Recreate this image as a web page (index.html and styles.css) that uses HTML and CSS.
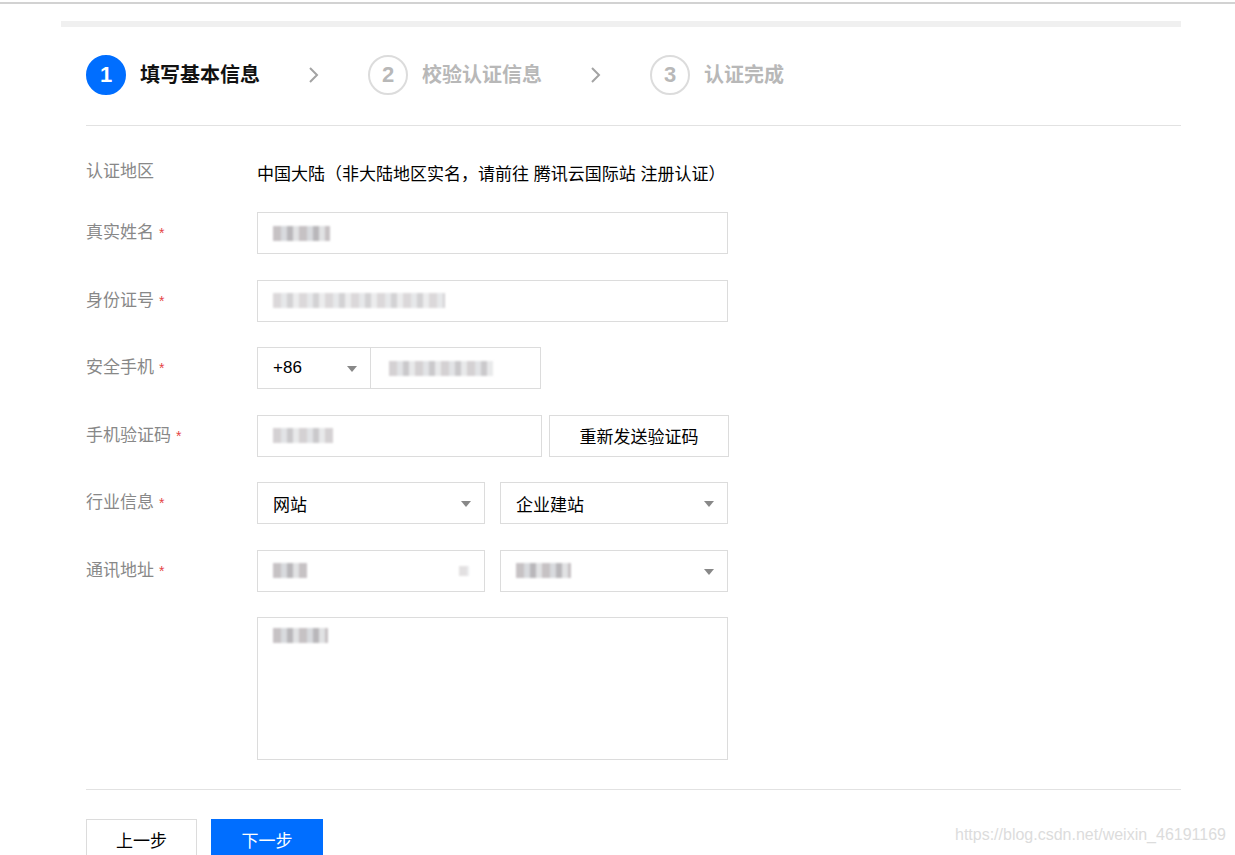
FILE: index.html
```html
<!DOCTYPE html>
<html lang="zh-CN">
<head>
  <meta charset="UTF-8" />
  <meta name="viewport" content="width=device-width, initial-scale=1.0" />
  <title>实名认证 - 填写基本信息</title>
  <link rel="stylesheet" href="styles.css">
</head>
<body>
  <div class="browser-edge"></div>

  <div class="page">
    <div class="page-bar"></div>

    <div class="card">
      <div class="steps">
        <div class="step active">
          <span class="step-num">1</span>
          <span class="step-title">填写基本信息</span>
        </div>
        <svg class="step-arrow" width="12" height="18" viewBox="0 0 12 18">
          <polyline points="2,2 9,9 2,16" fill="none" stroke="#a3a3a3" stroke-width="2" />
        </svg>
        <div class="step">
          <span class="step-num">2</span>
          <span class="step-title">校验认证信息</span>
        </div>
        <svg class="step-arrow" width="12" height="18" viewBox="0 0 12 18">
          <polyline points="2,2 9,9 2,16" fill="none" stroke="#a3a3a3" stroke-width="2" />
        </svg>
        <div class="step">
          <span class="step-num">3</span>
          <span class="step-title">认证完成</span>
        </div>
      </div>

      <form class="form">
        <div class="row row-text">
          <label class="row-label">认证地区</label>
          <div class="row-value">中国大陆（非大陆地区实名，请前往 腾讯云国际站 注册认证）</div>
        </div>

        <div class="row">
          <label class="row-label">真实姓名<span class="req">*</span></label>
          <div class="input w-full"><span class="mosaic m-name"></span></div>
        </div>

        <div class="row">
          <label class="row-label">身份证号<span class="req">*</span></label>
          <div class="input w-full"><span class="mosaic m-id"></span></div>
        </div>

        <div class="row">
          <label class="row-label">安全手机<span class="req">*</span></label>
          <div class="select w-code">+86<i class="caret"></i></div>
          <div class="input w-phone"><span class="mosaic m-phone"></span></div>
        </div>

        <div class="row">
          <label class="row-label">手机验证码<span class="req">*</span></label>
          <div class="input w-code-input"><span class="mosaic m-code"></span></div>
          <button type="button" class="btn btn-send">重新发送验证码</button>
        </div>

        <div class="row">
          <label class="row-label">行业信息<span class="req">*</span></label>
          <div class="select w-half">网站<i class="caret"></i></div>
          <div class="select w-half gap">企业建站<i class="caret"></i></div>
        </div>

        <div class="row">
          <label class="row-label">通讯地址<span class="req">*</span></label>
          <div class="input w-half"><span class="mosaic m-city"></span><span class="mosaic m-dot"></span></div>
          <div class="select w-half gap"><span class="mosaic m-area"></span><i class="caret"></i></div>
        </div>

        <div class="row row-area">
          <span class="row-label"></span>
          <div class="textarea"><span class="mosaic m-street"></span></div>
        </div>

        <div class="actions">
          <button type="button" class="btn btn-prev">上一步</button>
          <button type="button" class="btn btn-next">下一步</button>
        </div>
      </form>
    </div>
  </div>

  <div class="watermark">https://blog.csdn.net/weixin_46191169</div>
</body>
</html>
```

FILE: styles.css
```css
body {
  margin: 0;
  font-family: "Liberation Sans", "Noto Sans CJK SC", sans-serif;
  font-size: 17px;
  color: #000;
  background: #fff;
  height: 855px;
  overflow: hidden;
  position: relative;
}
.browser-edge {
  height: 2px;
  border-bottom: 2px solid #d2d2d2;
}
.page {
  margin-left: 61px;
  width: 1120px;
}
.page-bar {
  margin-top: 17px;
  height: 6px;
  background: #f0f0f0;
}
.card {
  padding-left: 25px;
}

/* steps */
.steps {
  display: flex;
  align-items: center;
  padding: 28px 0 30px;
  border-bottom: 1px solid #e2e2e2;
}
.step {
  display: flex;
  align-items: center;
}
.step-num {
  width: 36px;
  height: 36px;
  border: 2px solid #dcdcdc;
  border-radius: 50%;
  display: flex;
  align-items: center;
  justify-content: center;
  font-size: 22px;
  font-weight: bold;
  color: #b8b8b8;
}
.step-title {
  margin-left: 14px;
  font-size: 20px;
  font-weight: bold;
  color: #b8b8b8;
  line-height: 30px;
}
.step.active .step-num {
  background: #006eff;
  border-color: #006eff;
  color: #fff;
}
.step.active .step-title {
  color: #111;
}
.step-arrow {
  margin: 0 48px 0 48px;
}

/* form */
.form {
  padding-top: 31px;
}
.row {
  display: flex;
  align-items: center;
  margin-bottom: 25.5px;
}
.row-text {
  height: 30px;
  margin-bottom: 25px;
}
.row-label {
  width: 171px;
  flex: none;
  color: #888;
  line-height: 22px;
}
.req {
  color: #e54545;
  font-size: 14px;
  margin-left: 5px;
}
.row-value {
  color: #000;
}
.input, .select {
  box-sizing: border-box;
  height: 42px;
  border: 1px solid #dcdcdc;
  padding-left: 15px;
  display: flex;
  align-items: center;
  position: relative;
  background: #fff;
}
.select .caret {
  position: absolute;
  right: 13px;
  top: 18px;
  border-left: 5px solid transparent;
  border-right: 5px solid transparent;
  border-top: 6px solid #888;
}
.w-full { width: 471px; }
.w-code { width: 114px; }
.w-phone { width: 171px; margin-left: -1px; }
.w-code-input { width: 285px; }
.w-half { width: 228px; }
.gap { margin-left: 15px; }
.textarea {
  box-sizing: border-box;
  width: 471px;
  height: 143px;
  border: 1px solid #dcdcdc;
  padding: 10px 15px;
}
.row-area {
  align-items: flex-start;
  margin-bottom: 29px;
}

/* blurred private data */
.mosaic {
  display: inline-block;
  height: 15px;
  background: repeating-linear-gradient(90deg, #b9b3b6 0 8px, #cfd2d6 8px 14px, #a8a6aa 14px 20px, #dadbdd 20px 26px);
  filter: blur(1px);
  opacity: 0.8;
}
.m-name { width: 57px; }
.m-id { width: 172px; opacity: 0.5; }
.m-phone { width: 104px; margin-left: 3px; opacity: 0.6; }
.m-code { width: 60px; opacity: 0.6; }
.m-city { width: 34px; }
.m-dot { width: 10px; height: 10px; margin-left: 152px; opacity: 0.4; }
.m-area { width: 55px; }
.m-street { width: 55px; }

/* buttons */
.btn {
  box-sizing: border-box;
  height: 42px;
  font-family: inherit;
  font-size: 17px;
  border: 1px solid #dcdcdc;
  background: #fff;
  color: #000;
  cursor: pointer;
}
.btn-send {
  width: 180px;
  margin-left: 7px;
}
.actions {
  border-top: 1px solid #e2e2e2;
  padding-top: 29px;
  display: flex;
}
.btn-prev {
  width: 111px;
  height: 40px;
}
.btn-next {
  width: 112px;
  height: 40px;
  margin-left: 14px;
  background: #006eff;
  border-color: #006eff;
  color: #fff;
}
.watermark {
  position: absolute;
  right: 9px;
  top: 826px;
  font-size: 16px;
  color: #dcdcdc;
}
```
